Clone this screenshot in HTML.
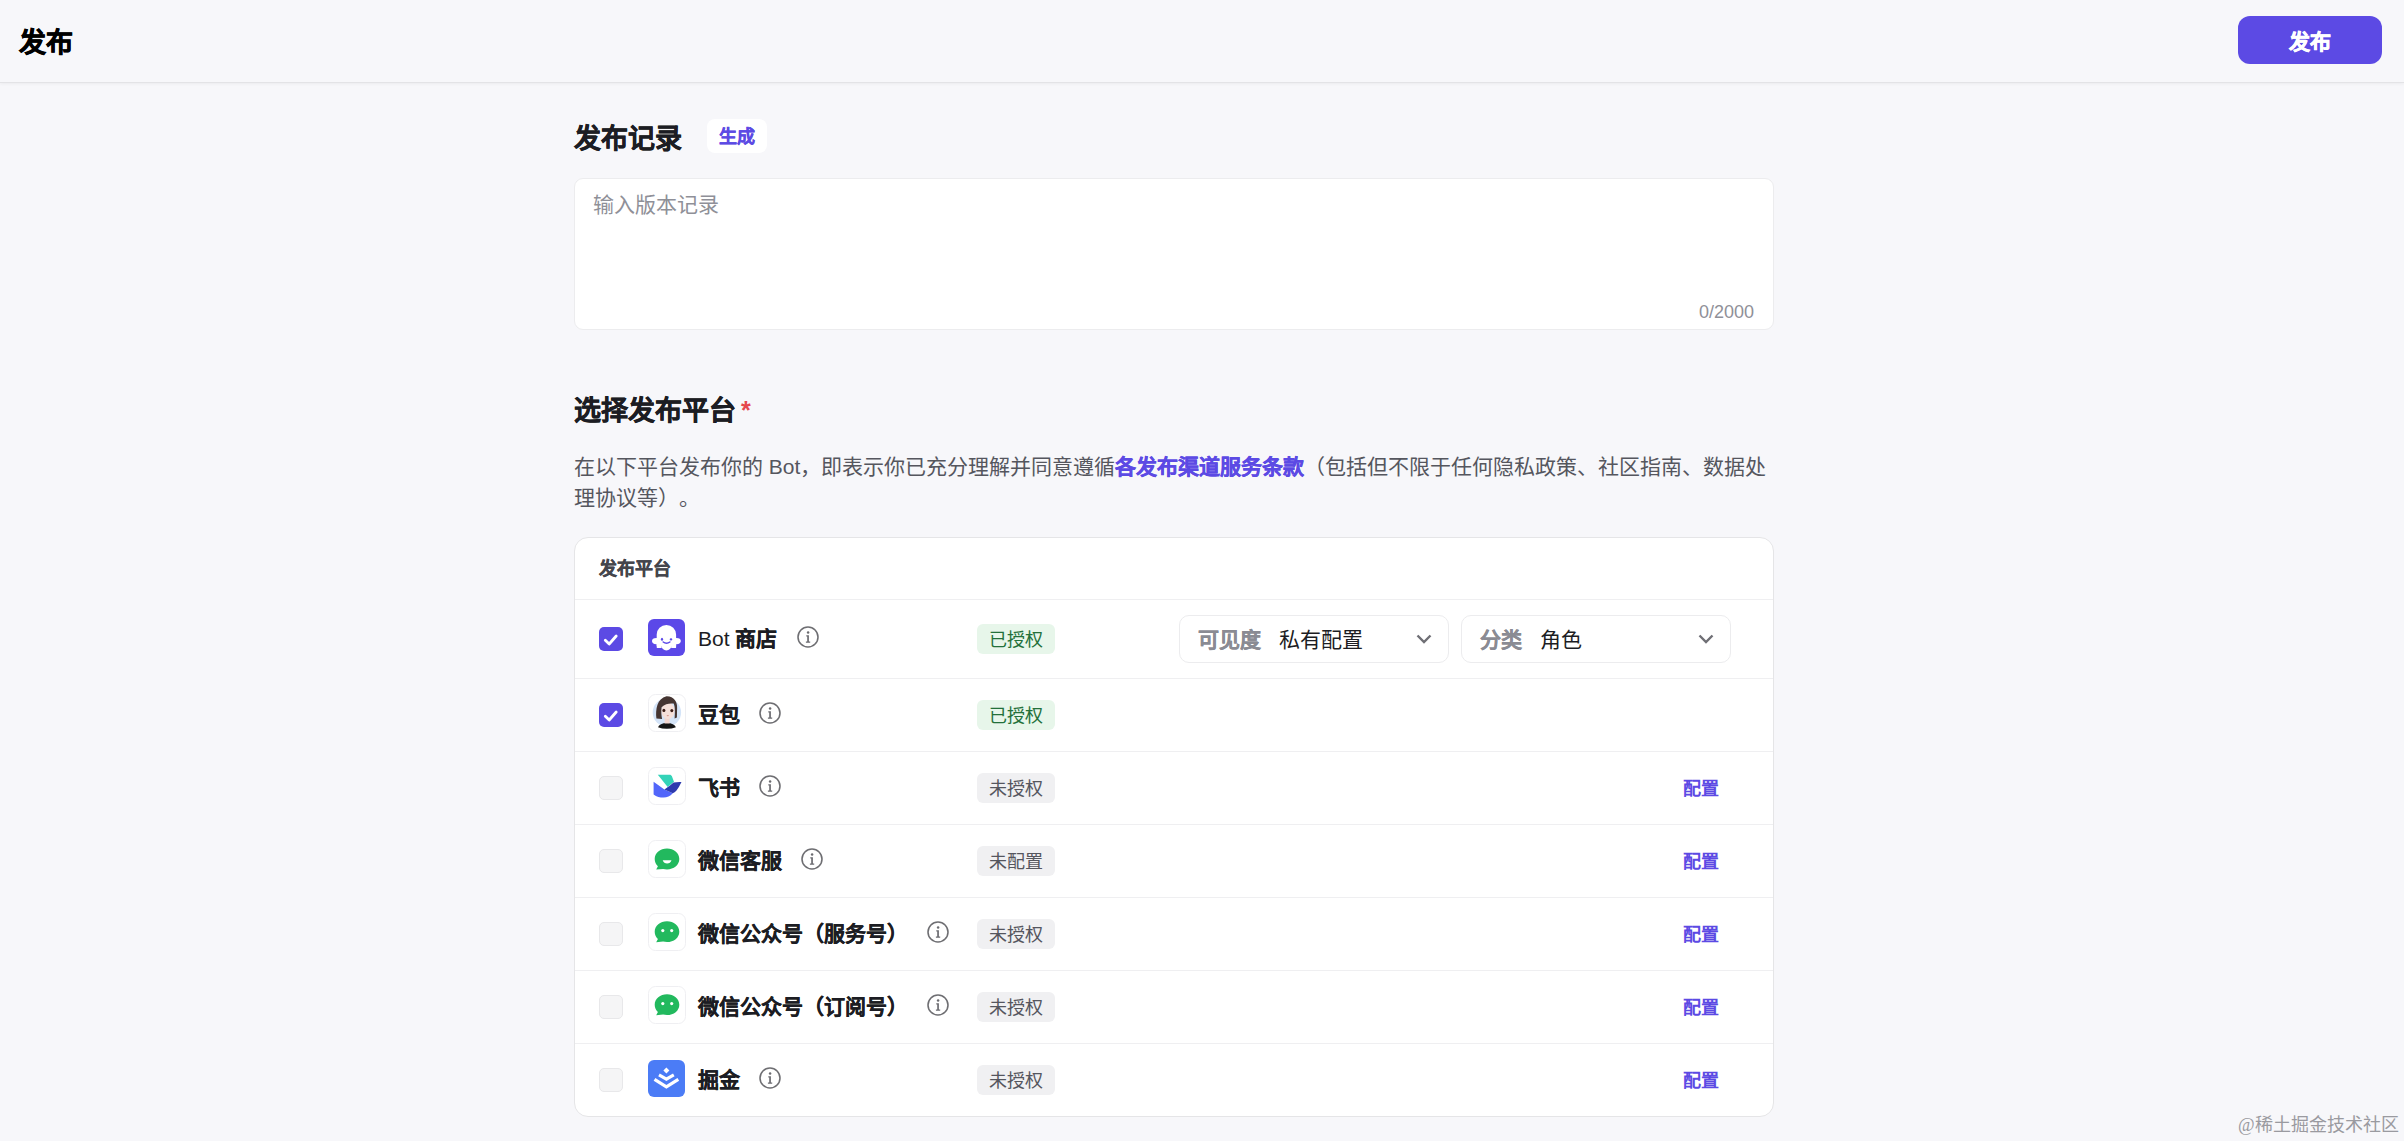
<!DOCTYPE html>
<html lang="zh-CN"><head><meta charset="utf-8">
<style>
*{box-sizing:border-box;margin:0;padding:0}
html,body{width:2404px;height:1141px;overflow:hidden}
body{background:#F7F7FA;font-family:"Liberation Sans",sans-serif;color:#1c1d23;position:relative}
svg{display:block}
.hdr{position:absolute;left:0;top:0;width:2404px;height:83px;background:#F7F7FA;border-bottom:1px solid #E3E3E6;box-shadow:0 1px 3px rgba(0,0,0,0.05)}
.hdr .t{position:absolute;left:19px;top:23px;font-size:27px;font-weight:700;line-height:40px;color:#000}
.pub{position:absolute;left:2238px;top:16px;width:144px;height:48px;border-radius:12px;background:#5C4AE4;color:#fff;font-size:21px;font-weight:700;line-height:52px;text-align:center}
.h2{position:absolute;font-size:27px;font-weight:700;line-height:40px;color:#1c1d23}
.chip{position:absolute;left:707px;top:119px;width:60px;height:34px;border-radius:8px;background:#fff;color:#5C4AE4;font-size:18px;font-weight:700;line-height:36px;text-align:center}
.ta{position:absolute;left:574px;top:178px;width:1200px;height:152px;background:#fff;border:1px solid #ECECEE;border-radius:9px}
.ta .ph{position:absolute;left:18px;top:10px;font-size:21px;line-height:32px;color:#8f9098}
.ta .cnt{position:absolute;right:19px;bottom:5px;font-size:18px;line-height:24px;color:#8f9098}
.desc{position:absolute;left:574px;top:451px;text-spacing-trim:space-all;width:1220px;font-size:21px;line-height:31px;color:#55565e}
.desc b{color:#5C4AE4;font-weight:700}
.card{position:absolute;left:574px;top:537px;width:1200px;height:580px;background:#fff;border:1px solid #E5E5E7;border-radius:14px}
.card .th{position:absolute;left:24px;top:18px;font-size:18px;font-weight:700;line-height:26px;color:#44454c}
.dv{position:absolute;left:575px;width:1198px;height:1px;background:#EFEFF1}
.cb{position:absolute;left:599px;width:24px;height:24px;border-radius:5px;background:#F5F5F6;border:1px solid #E8E8EA}
.cb.on{background:#5C4AE4;border:none}
.ic{position:absolute;left:648px}
.nm{position:absolute;left:698px;font-size:21px;line-height:30px;color:#1c1d23;white-space:nowrap}
.nm b{font-weight:700}
.info{position:absolute;width:22px;height:22px}
.tag{position:absolute;left:977px;width:78px;height:30px;border-radius:6px;font-size:18px;line-height:32px;text-align:center}
.tag.ok{background:#E7F6EA;color:#23703A}
.tag.no{background:#F0F0F2;color:#55565e}
.cfg{position:absolute;left:1683px;font-size:18px;font-weight:700;line-height:28px;color:#5C4AE4}
.sel{position:absolute;top:615px;width:270px;height:48px;border:1px solid #ECECEE;border-radius:10px;background:#fff}
.sel .k{position:absolute;left:18px;top:9px;font-size:21px;font-weight:700;line-height:30px;color:#8a8b93}
.sel .v{position:absolute;top:9px;font-size:21px;line-height:30px;color:#1c1d23}
.sel svg{position:absolute;right:16px;top:18px}
.wm{position:absolute;left:2238px;top:1112px;font-family:"Liberation Serif",serif;font-size:18px;line-height:26px;color:#9a9aa0;white-space:nowrap}
.hdr .t,.pub{-webkit-text-stroke:0.6px currentColor}
.h2{-webkit-text-stroke:0.4px currentColor}
.chip,.card .th,.desc b{-webkit-text-stroke:0.3px currentColor}
.nm b,.sel .k{-webkit-text-stroke:0.2px currentColor}
</style></head><body>
<div class="hdr"><div class="t">发布</div></div>
<div class="pub">发布</div>

<div class="h2" style="left:574px;top:119px">发布记录</div>
<div class="chip">生成</div>
<div class="ta"><div class="ph">输入版本记录</div><div class="cnt">0/2000</div></div>

<div class="h2" style="left:574px;top:391px">选择发布平台</div>
<div class="abs" style="position:absolute;left:741px;top:396px;font-size:25px;line-height:28px;color:#E5484D;font-weight:700">*</div>
<div class="desc">在以下平台发布你的 Bot，即表示你已充分理解并同意遵循<b>各发布渠道服务条款</b>（包括但不限于任何隐私政策、社区指南、数据处<br>理协议等）。</div>

<div class="card"><div class="th">发布平台</div></div>
<div class="sel" style="left:1179px"><div class="k">可见度</div><div class="v" style="left:99px">私有配置</div><svg width="16" height="10" viewBox="0 0 16 10"><path d="M1.5 1.5l6.5 6.5l6.5-6.5" stroke="#6F6F75" stroke-width="2.4" fill="none"/></svg></div>
<div class="sel" style="left:1461px"><div class="k">分类</div><div class="v" style="left:78px">角色</div><svg width="16" height="10" viewBox="0 0 16 10"><path d="M1.5 1.5l6.5 6.5l6.5-6.5" stroke="#6F6F75" stroke-width="2.4" fill="none"/></svg></div>
<div class="dv" style="top:599px"></div>
<div class="cb on" style="top:627px"><svg width="24" height="24" viewBox="0 0 24 24"><path d="M6.3 13.2l3.9 3.8l7-8" stroke="#fff" stroke-width="2.8" fill="none" stroke-linecap="round" stroke-linejoin="round"/></svg></div>
<div class="ic" style="top:619px"><svg width="37" height="37" viewBox="0 0 37 37"><rect width="37" height="37" rx="6" fill="#5B48E8"/><g fill="#fff"><path d="M8.7 15.6a9.7 9.7 0 0 1 19.4 0V27H8.7z"/><ellipse cx="8.3" cy="22.1" rx="4.3" ry="3.1"/><ellipse cx="28.5" cy="22.1" rx="4.3" ry="3.1"/><path d="M8.7 24h5v4.2q0 0.9-0.9 0.9h-3.2q-0.9 0-0.9-0.9z"/><path d="M23.1 24h5v4.2q0 0.9-0.9 0.9h-3.2q-0.9 0-0.9-0.9z"/><circle cx="18.4" cy="26.4" r="5"/></g><g fill="#5B48E8"><ellipse cx="14" cy="20.2" rx="1.1" ry="1.5"/><ellipse cx="23" cy="20.4" rx="1.3" ry="1.1"/><path d="M15.2 23q3.3 2.6 6.7 0" stroke="#5B48E8" stroke-width="1.5" fill="none" stroke-linecap="round"/></g></svg></div>
<div class="nm" style="top:624px">Bot <b>商店</b></div>
<div class="info" style="left:797.0px;top:626.0px"><svg width="22" height="22" viewBox="0 0 22 22"><circle cx="11" cy="11" r="10" fill="none" stroke="#6E6E72" stroke-width="1.55"/><circle cx="11.1" cy="6.6" r="1.25" fill="#6B6B70"/><path d="M9.3 9.3h2.6v6.3h1.3v1.2H8.9v-1.2h1.3v-5.1h-0.9z" fill="#6B6B70"/></svg></div>
<div class="tag ok" style="top:624px">已授权</div>
<div class="dv" style="top:678px"></div>
<div class="cb on" style="top:703px"><svg width="24" height="24" viewBox="0 0 24 24"><path d="M6.3 13.2l3.9 3.8l7-8" stroke="#fff" stroke-width="2.8" fill="none" stroke-linecap="round" stroke-linejoin="round"/></svg></div>
<div class="ic" style="top:694px"><svg width="38" height="38" viewBox="0 0 38 38"><rect x="0.5" y="0.5" width="37" height="37" rx="7" fill="#fff" stroke="#EFEFF2"/><circle cx="18.9" cy="18.5" r="14.2" fill="#D4E4F8"/><path d="M10 33.2q1.5-4 8.9-4.5q7.4 0.5 9 4.5q-4 1.6-9 1.6q-5 0-8.9-1.6z" fill="#151515"/><rect x="16.6" y="22" width="5" height="7.5" fill="#F2D6CF"/><ellipse cx="19.9" cy="16.8" rx="6.7" ry="8.3" fill="#F6E0DA"/><path d="M8.4 24.6C7.4 15 9 4.6 18.5 2.2C26 2 29.6 8 29.1 14L28.9 23.6L26.6 24.6C27 19 27.2 12.5 25.6 9.6C22 9 17 9.8 13.6 13.2C13 17 13.3 21 14.1 24.9z" fill="#453532"/><ellipse cx="15.9" cy="16.4" rx="1.5" ry="1.7" fill="#3a1d18"/><ellipse cx="23.8" cy="16.6" rx="1.5" ry="1.7" fill="#3a1d18"/><ellipse cx="19.8" cy="21.6" rx="1.2" ry="0.6" fill="#D99A94"/></svg></div>
<div class="nm" style="top:700px"><b>豆包</b></div>
<div class="info" style="left:758.8px;top:702.0px"><svg width="22" height="22" viewBox="0 0 22 22"><circle cx="11" cy="11" r="10" fill="none" stroke="#6E6E72" stroke-width="1.55"/><circle cx="11.1" cy="6.6" r="1.25" fill="#6B6B70"/><path d="M9.3 9.3h2.6v6.3h1.3v1.2H8.9v-1.2h1.3v-5.1h-0.9z" fill="#6B6B70"/></svg></div>
<div class="tag ok" style="top:700px">已授权</div>
<div class="dv" style="top:751px"></div>
<div class="cb" style="top:776px"></div>
<div class="ic" style="top:767px"><svg width="38" height="38" viewBox="0 0 38 38"><rect x="0.5" y="0.5" width="37" height="37" rx="7" fill="#fff" stroke="#EFEFF2"/><path d="M9.8 7.7h12.6l1.4 1.3l2.2 5.8l-6.3 5.1z" fill="#33D3B8"/><path d="M5.6 14.8l10.8 7.8l8.4 3.7q-4 4.3-9.2 4.3q-5.6 0-10-3.2z" fill="#5266FA"/><path d="M16.4 22.6q4.5-3.2 9.2-7.2q4-0.6 7.9-0.4q-2.5 5.5-5.2 8.7q-1.6 1.8-3.5 2.6z" fill="#2D3AAE"/></svg></div>
<div class="nm" style="top:773px"><b>飞书</b></div>
<div class="info" style="left:758.8px;top:775.0px"><svg width="22" height="22" viewBox="0 0 22 22"><circle cx="11" cy="11" r="10" fill="none" stroke="#6E6E72" stroke-width="1.55"/><circle cx="11.1" cy="6.6" r="1.25" fill="#6B6B70"/><path d="M9.3 9.3h2.6v6.3h1.3v1.2H8.9v-1.2h1.3v-5.1h-0.9z" fill="#6B6B70"/></svg></div>
<div class="tag no" style="top:773px">未授权</div>
<div class="cfg" style="top:775px">配置</div>
<div class="dv" style="top:824px"></div>
<div class="cb" style="top:849px"></div>
<div class="ic" style="top:840px"><svg width="38" height="38" viewBox="0 0 38 38"><rect x="0.5" y="0.5" width="37" height="37" rx="7" fill="#fff" stroke="#EFEFF2"/><path d="M19 8.6c6.8 0 12.3 4.5 12.3 10.4s-5.5 10.4-12.3 10.4c-1.4 0-2.7-0.2-3.9-0.5l-6.9 0.6l1.7-3.3c-2-1.9-3.2-4.4-3.2-7.2c0-5.9 5.5-10.4 12.3-10.4z" fill="#22B95E"/><path d="M14.7 20.3h8.8q-1.2 3.2-4.4 3.2q-3.2 0-4.4-3.2z" fill="#fff"/></svg></div>
<div class="nm" style="top:846px"><b>微信客服</b></div>
<div class="info" style="left:801.0px;top:848.0px"><svg width="22" height="22" viewBox="0 0 22 22"><circle cx="11" cy="11" r="10" fill="none" stroke="#6E6E72" stroke-width="1.55"/><circle cx="11.1" cy="6.6" r="1.25" fill="#6B6B70"/><path d="M9.3 9.3h2.6v6.3h1.3v1.2H8.9v-1.2h1.3v-5.1h-0.9z" fill="#6B6B70"/></svg></div>
<div class="tag no" style="top:846px">未配置</div>
<div class="cfg" style="top:848px">配置</div>
<div class="dv" style="top:897px"></div>
<div class="cb" style="top:922px"></div>
<div class="ic" style="top:913px"><svg width="38" height="38" viewBox="0 0 38 38"><rect x="0.5" y="0.5" width="37" height="37" rx="7" fill="#fff" stroke="#EFEFF2"/><path d="M19 8.3c6.8 0 12.3 4.5 12.3 10.4s-5.5 10.4-12.3 10.4c-1.4 0-2.7-0.2-3.9-0.5l-6.9 0.6l1.7-3.3c-2-1.9-3.2-4.4-3.2-7.2c0-5.9 5.5-10.4 12.3-10.4z" fill="#22B95E"/><circle cx="14.8" cy="17.6" r="1.6" fill="#fff"/><circle cx="23.7" cy="17.6" r="1.6" fill="#fff"/></svg></div>
<div class="nm" style="top:919px"><b>微信公众号（服务号）</b></div>
<div class="info" style="left:926.6px;top:921.0px"><svg width="22" height="22" viewBox="0 0 22 22"><circle cx="11" cy="11" r="10" fill="none" stroke="#6E6E72" stroke-width="1.55"/><circle cx="11.1" cy="6.6" r="1.25" fill="#6B6B70"/><path d="M9.3 9.3h2.6v6.3h1.3v1.2H8.9v-1.2h1.3v-5.1h-0.9z" fill="#6B6B70"/></svg></div>
<div class="tag no" style="top:919px">未授权</div>
<div class="cfg" style="top:921px">配置</div>
<div class="dv" style="top:970px"></div>
<div class="cb" style="top:995px"></div>
<div class="ic" style="top:986px"><svg width="38" height="38" viewBox="0 0 38 38"><rect x="0.5" y="0.5" width="37" height="37" rx="7" fill="#fff" stroke="#EFEFF2"/><path d="M19 8.3c6.8 0 12.3 4.5 12.3 10.4s-5.5 10.4-12.3 10.4c-1.4 0-2.7-0.2-3.9-0.5l-6.9 0.6l1.7-3.3c-2-1.9-3.2-4.4-3.2-7.2c0-5.9 5.5-10.4 12.3-10.4z" fill="#22B95E"/><circle cx="14.8" cy="17.6" r="1.6" fill="#fff"/><circle cx="23.7" cy="17.6" r="1.6" fill="#fff"/></svg></div>
<div class="nm" style="top:992px"><b>微信公众号（订阅号）</b></div>
<div class="info" style="left:926.6px;top:994.0px"><svg width="22" height="22" viewBox="0 0 22 22"><circle cx="11" cy="11" r="10" fill="none" stroke="#6E6E72" stroke-width="1.55"/><circle cx="11.1" cy="6.6" r="1.25" fill="#6B6B70"/><path d="M9.3 9.3h2.6v6.3h1.3v1.2H8.9v-1.2h1.3v-5.1h-0.9z" fill="#6B6B70"/></svg></div>
<div class="tag no" style="top:992px">未授权</div>
<div class="cfg" style="top:994px">配置</div>
<div class="dv" style="top:1043px"></div>
<div class="cb" style="top:1068px"></div>
<div class="ic" style="top:1060px"><svg width="37" height="37" viewBox="0 0 37 37"><rect width="37" height="37" rx="6" fill="#4B7CF6"/><path d="M18.4 7.6l3 2.9l-3 2.9l-3-2.9z" fill="#fff"/><path d="M11 14.8l7.4 4.3l7.4-4.3" stroke="#fff" stroke-width="3.1" fill="none"/><path d="M6.5 19.3l11.9 7.5l11.9-7.5" stroke="#fff" stroke-width="3.2" fill="none"/></svg></div>
<div class="nm" style="top:1065px"><b>掘金</b></div>
<div class="info" style="left:758.8px;top:1067.0px"><svg width="22" height="22" viewBox="0 0 22 22"><circle cx="11" cy="11" r="10" fill="none" stroke="#6E6E72" stroke-width="1.55"/><circle cx="11.1" cy="6.6" r="1.25" fill="#6B6B70"/><path d="M9.3 9.3h2.6v6.3h1.3v1.2H8.9v-1.2h1.3v-5.1h-0.9z" fill="#6B6B70"/></svg></div>
<div class="tag no" style="top:1065px">未授权</div>
<div class="cfg" style="top:1067px">配置</div><div class="wm">@稀土掘金技术社区</div>
</body></html>
